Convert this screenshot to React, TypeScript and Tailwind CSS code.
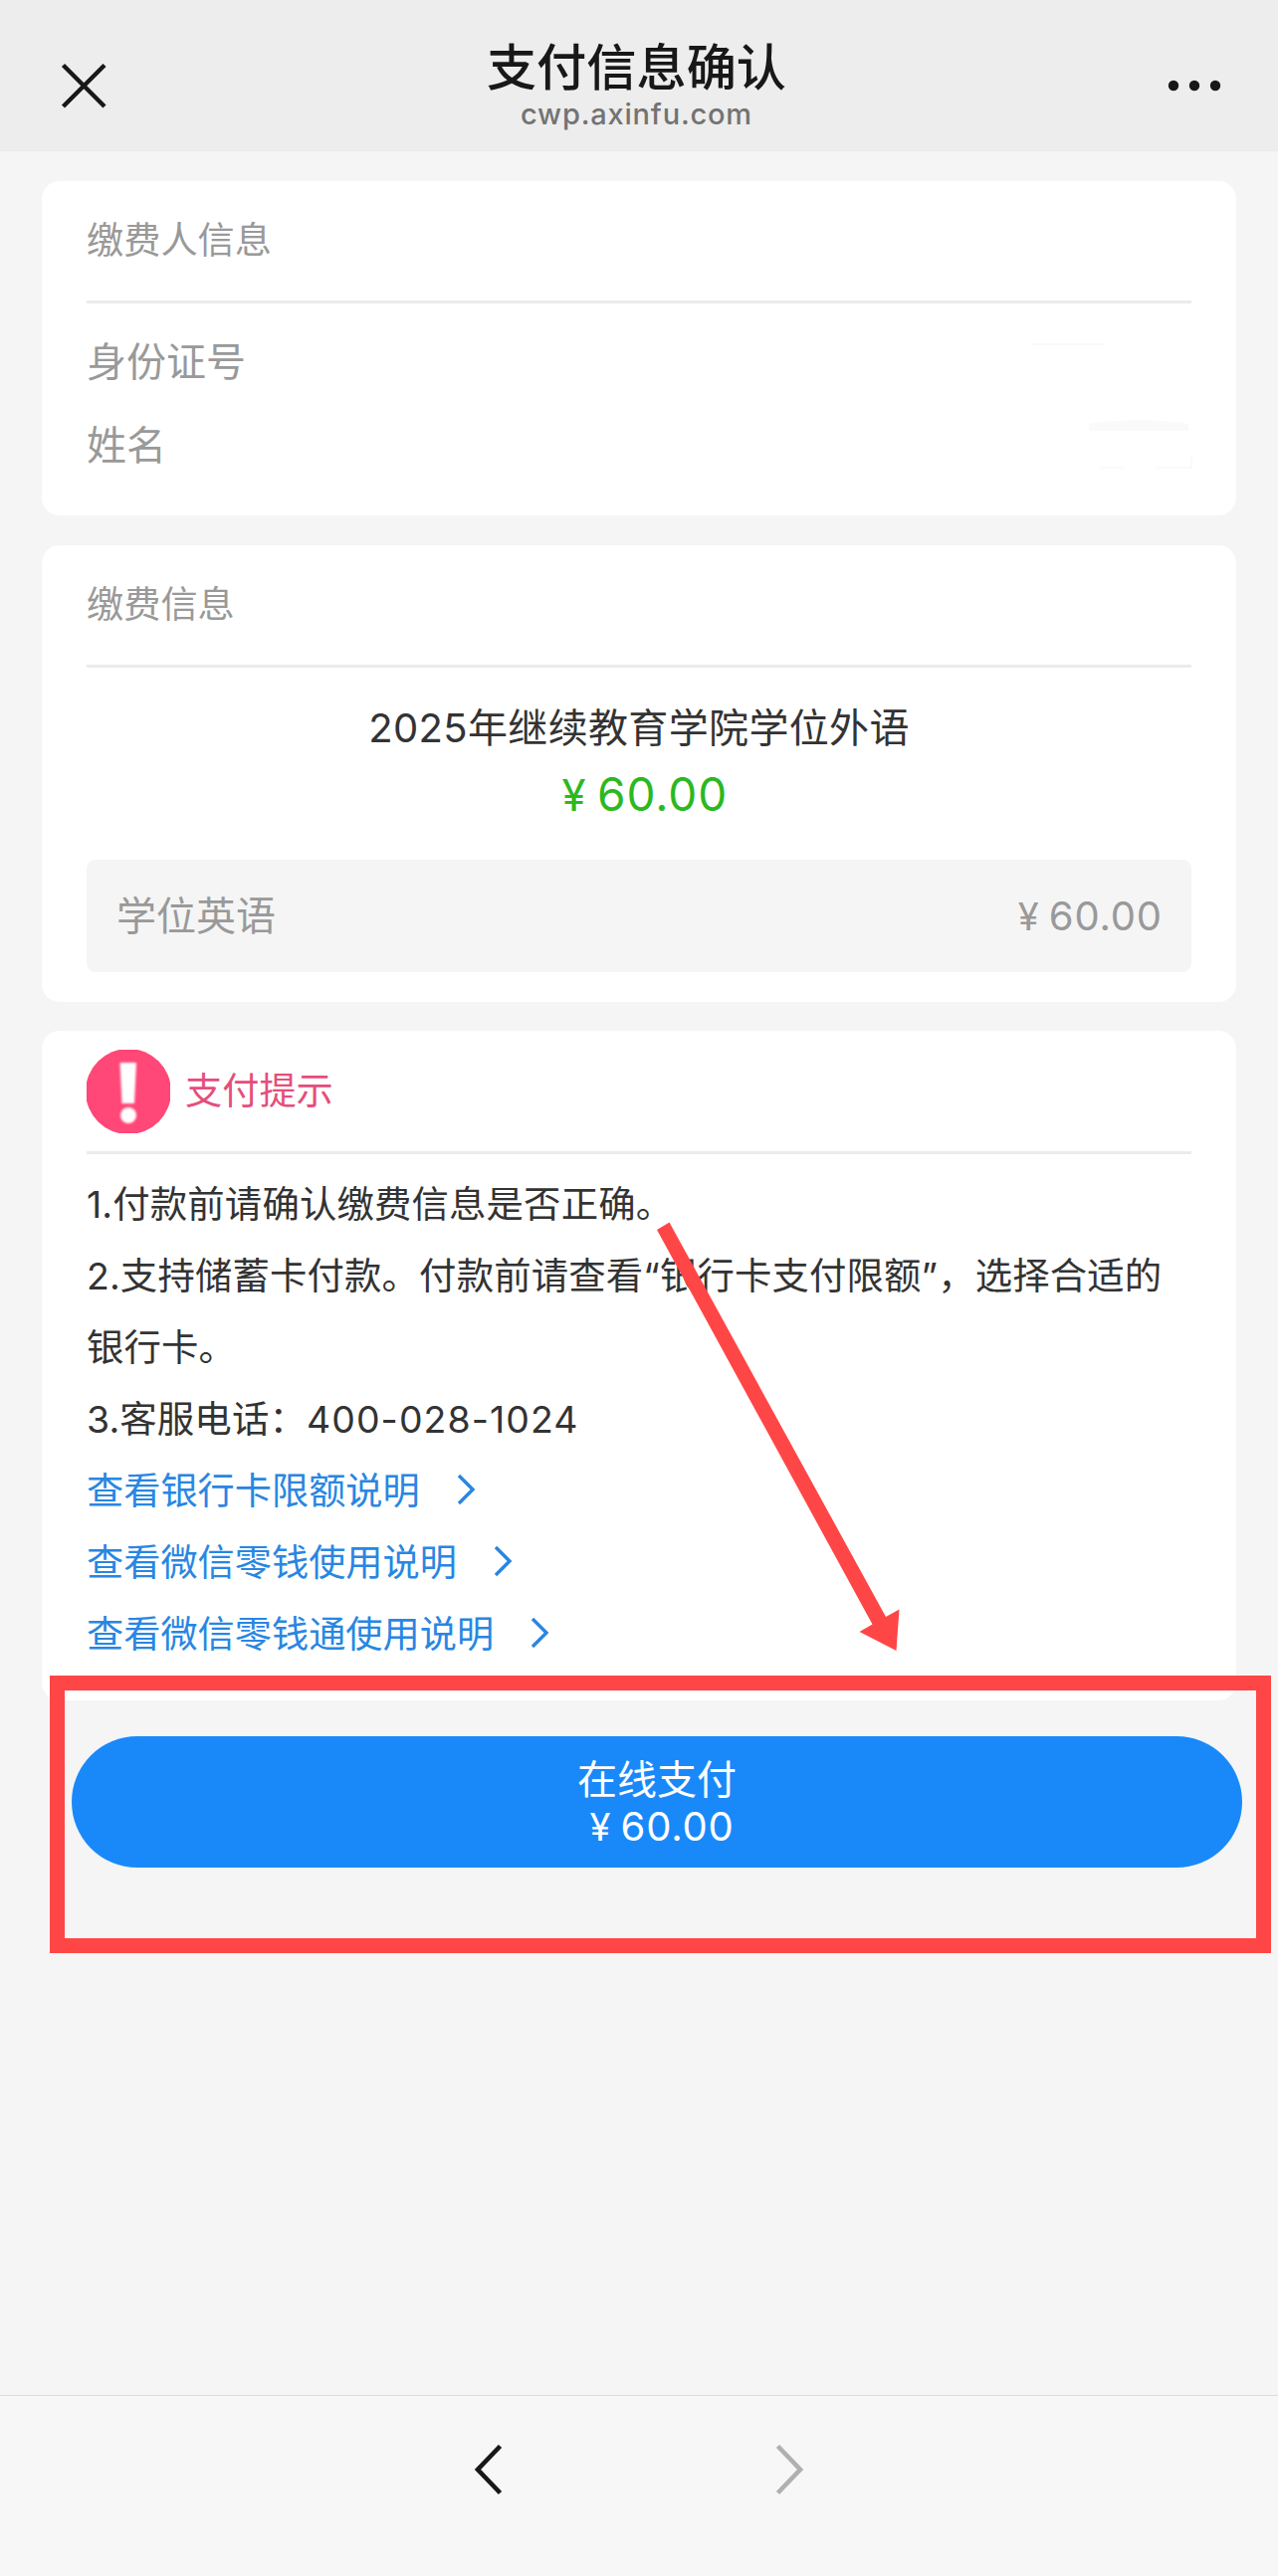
import type { ReactNode } from "react";

const notices = [
  "1.付款前请确认缴费信息是否正确。",
  "2.支持储蓄卡付款。付款前请查看“银行卡支付限额”，选择合适的银行卡。",
];

const phone = "400-028-1024";

const links = [
  "查看银行卡限额说明",
  "查看微信零钱使用说明",
  "查看微信零钱通使用说明",
];

const Card = ({ children, className }: { children: ReactNode; className: string }) => (
  <section className={`rounded-[18px] bg-white px-[45px] ${className}`}>
    {children}
  </section>
);

const Price = ({ className }: { className: string }) => (
  <span
    className={`-mr-[0.02em] flex items-baseline tracking-[0.02em] whitespace-nowrap ${className}`}
  >
    <span className="w-[1.06em] text-center text-[0.95em]">¥</span>
    <span>60.00</span>
  </span>
);

const Header = () => (
  <header className="flex h-[152px] items-center justify-between bg-[#ededed] pr-[57px] pl-[60px]">
    <svg className="mt-5 h-12 w-12" viewBox="0 0 48 48" fill="none">
      <path d="M3.5 3.5 45 45M45 3.5 3.5 45" stroke="#181818" strokeWidth="4.4" />
    </svg>
    <div className="flex flex-col items-center pt-[18px] pr-[2px]">
      <h1 className="h-[60px] text-[50.2px] leading-[62px] font-medium text-[#181818]">
        支付信息确认
      </h1>
      <p className="text-[29px] leading-[36px] font-medium tracking-[0.8px] text-[#737373]">
        cwp.axinfu.com
      </p>
    </div>
    <svg className="mt-5 h-3 w-[54px]" viewBox="0 0 54 12" fill="#181818">
      <circle cx="6" cy="6" r="5.2" />
      <circle cx="27" cy="6" r="5.2" />
      <circle cx="48" cy="6" r="5.2" />
    </svg>
  </header>
);

const PayerCard = () => (
  <Card className="relative h-[336px]">
    <h2 className="h-[120px] text-[37.2px] leading-[120px] text-[#999]">缴费人信息</h2>
    <div className="h-[3px] bg-[#ebebeb]" />
    <dl className="pt-[17px] text-[40px] leading-[84px] text-[#999]">
      <dt>身份证号</dt>
      <dt>姓名</dt>
    </dl>
    {/* restos del borrado de datos personales */}
    <svg
      className="absolute top-[158px] right-[41px] h-[140px] w-[170px]"
      viewBox="0 0 170 140"
      fill="none"
    >
      <path d="M4 6h76" stroke="#fafafa" strokeWidth="2" />
      <path d="M63 93v-7c30-5 70-5 100 0v7z" fill="#fafafa" />
      <path d="M74 130h24M130 130h36v-12" stroke="#fafafa" strokeWidth="2" />
    </svg>
  </Card>
);

const PaymentCard = () => (
  <Card className="h-[459px]">
    <h2 className="h-[120px] text-[37.2px] leading-[120px] text-[#999]">缴费信息</h2>
    <div className="h-[3px] bg-[#ebebeb]" />
    <div className="flex flex-col items-center pt-[31px]">
      <p className="text-[40px] leading-[59px] tracking-[0.35px] text-[#333]">
        2025年继续教育学院学位外语
      </p>
      <Price className="pt-[2px] text-[46px] leading-[70px] text-[#2cb81f]" />
    </div>
    <div className="mt-[29px] flex h-[113px] items-center justify-between rounded-[9px] bg-[#f5f5f5] px-[30px] text-[40px] text-[#999]">
      <span className="mt-[2px]">学位英语</span>
      <Price className="mt-[1px]" />
    </div>
  </Card>
);

const TipsCard = () => (
  <Card className="h-[673px]">
    <div className="flex h-[121px] items-center gap-[15px]">
      <svg className="h-[84px] w-[84px] shrink-0" viewBox="0 0 84 84">
        <circle cx="42" cy="42" r="43" fill="#ff4778" />
        <g fill="#fff" className="blur-[1px]">
          <path d="M33.500 13h16.500l-2 41h-12.500z" />
          <circle cx="42" cy="66" r="8" />
        </g>
      </svg>
      <h2 className="text-[37.2px] leading-[60px] text-[#e54e7b]">支付提示</h2>
    </div>
    <div className="h-[3px] bg-[#ebebeb]" />
    <div className="pt-[15px] text-[37.4px] leading-[72px] tracking-[0.14px] text-[#333]">
      {notices.map((notice) => (
        <p key={notice}>{notice}</p>
      ))}
      <p className="flex">
        <span>3.客服电话：</span>
        <span className="tracking-[1.1px]">{phone}</span>
      </p>
      {links.map((link) => (
        <a
          key={link}
          className="flex items-center gap-[37px] text-[37.2px] tracking-normal text-[#2986e2]"
        >
          {link}
          <svg className="-mt-[5px] h-8 w-5" viewBox="0 0 20 32" fill="none">
            <path d="M2 2 16 16 2 30" stroke="currentColor" strokeWidth="3.4" />
          </svg>
        </a>
      ))}
    </div>
  </Card>
);

const Footer = () => (
  <footer className="mt-auto flex h-[182px] justify-center gap-[274px] border-t border-[#dcdcdc] bg-[#f7f7f7] pt-[48px]">
    <svg className="h-[52px] w-[28px]" viewBox="0 0 28 52" fill="none">
      <path d="M25.5 2.5 3 26 25.5 49.5" stroke="#181818" strokeWidth="4.6" />
    </svg>
    <svg className="h-[52px] w-[28px]" viewBox="0 0 28 52" fill="none">
      <path d="M2.5 2.5 25 26 2.5 49.5" stroke="#b0b0b0" strokeWidth="4.6" />
    </svg>
  </footer>
);

export default function App() {
  return (
    <div className="relative flex h-[2589px] w-[1284px] flex-col overflow-hidden bg-[#f5f5f5] font-['Inter','Noto_Sans_CJK_SC',sans-serif]">
      <Header />
      <main className="flex flex-col px-[42px] pt-[30px]">
        <div className="flex flex-col gap-[29.5px]">
          <PayerCard />
          <PaymentCard />
          <TipsCard />
        </div>
        <button className="mt-[36px] -mr-[6px] ml-[30px] flex h-[132px] flex-col items-center justify-center rounded-full bg-[#1989fa] pt-[2px] text-[40px] leading-[47px] text-white">
          <span>在线支付</span>
          <Price className="" />
        </button>
      </main>
      <Footer />

      {/* marco y flecha que señalan el botón de pago */}
      <div className="absolute top-[1684px] left-[50px] h-[279px] w-[1227px] border-[15px] border-[#ff4646]" />
      <svg
        className="absolute top-[1228px] left-[659px] h-[432px] w-[246px]"
        viewBox="0 0 246 432"
        fill="#ff4646"
      >
        <path d="M1 8 13.500 .5 231 397 244.500 389.500 241.500 431 204.500 412 217.500 404.500z" />
      </svg>
    </div>
  );
}
